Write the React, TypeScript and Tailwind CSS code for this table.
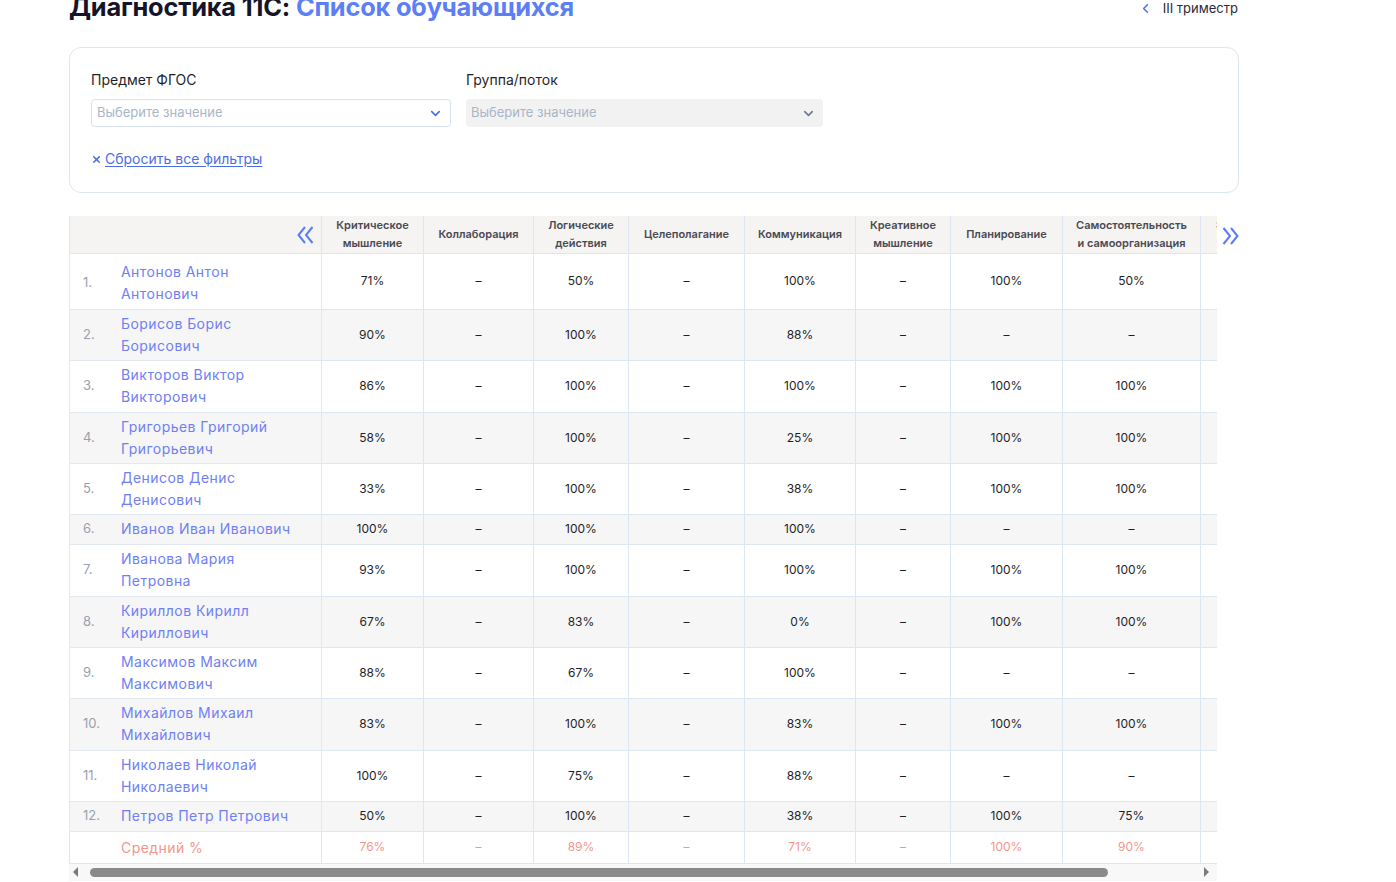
import { ChevronDown, ChevronLeft, X } from "lucide-react";

type Col = { title: string[]; width: string };

const COLUMNS: Col[] = [
  { title: ["Критическое", "мышление"], width: "w-[102px]" },
  { title: ["Коллаборация"], width: "w-[110px]" },
  { title: ["Логические", "действия"], width: "w-[95px]" },
  { title: ["Целеполагание"], width: "w-[116px]" },
  { title: ["Коммуникация"], width: "w-[111px]" },
  { title: ["Креативное", "мышление"], width: "w-[95px]" },
  { title: ["Планирование"], width: "w-[112px]" },
  { title: ["Самостоятельность", "и самоорганизация"], width: "w-[138px]" },
  { title: ["Эмоциональный", "интеллект"], width: "w-[123px]" },
];

// row heights follow the rendered table (two-line names vs one-line names)
const STUDENTS: { name: string; h: string; values: string[] }[] = [
  { name: "Антонов Антон Антонович", h: "h-[56px]", values: ["71%", "–", "50%", "–", "100%", "–", "100%", "50%", "–"] },
  { name: "Борисов Борис Борисович", h: "h-[51px]", values: ["90%", "–", "100%", "–", "88%", "–", "–", "–", "–"] },
  { name: "Викторов Виктор Викторович", h: "h-[52px]", values: ["86%", "–", "100%", "–", "100%", "–", "100%", "100%", "–"] },
  { name: "Григорьев Григорий Григорьевич", h: "h-[51px]", values: ["58%", "–", "100%", "–", "25%", "–", "100%", "100%", "–"] },
  { name: "Денисов Денис Денисович", h: "h-[51px]", values: ["33%", "–", "100%", "–", "38%", "–", "100%", "100%", "–"] },
  { name: "Иванов Иван Иванович", h: "h-[30px]", values: ["100%", "–", "100%", "–", "100%", "–", "–", "–", "–"] },
  { name: "Иванова Мария Петровна", h: "h-[52px]", values: ["93%", "–", "100%", "–", "100%", "–", "100%", "100%", "–"] },
  { name: "Кириллов Кирилл Кириллович", h: "h-[51px]", values: ["67%", "–", "83%", "–", "0%", "–", "100%", "100%", "–"] },
  { name: "Максимов Максим Максимович", h: "h-[51px]", values: ["88%", "–", "67%", "–", "100%", "–", "–", "–", "–"] },
  { name: "Михайлов Михаил Михайлович", h: "h-[52px]", values: ["83%", "–", "100%", "–", "83%", "–", "100%", "100%", "–"] },
  { name: "Николаев Николай Николаевич", h: "h-[51px]", values: ["100%", "–", "75%", "–", "88%", "–", "–", "–", "–"] },
  { name: "Петров Петр Петрович", h: "h-[30px]", values: ["50%", "–", "100%", "–", "38%", "–", "100%", "75%", "–"] },
];

const AVERAGE = ["76%", "–", "89%", "–", "71%", "–", "100%", "90%", "–"];

function DoubleChevron({ dir }: { dir: "left" | "right" }) {
  return (
    <svg width="17" height="18" viewBox="0 0 17 18" fill="none" stroke="#5a7cf4" strokeWidth="2" strokeLinejoin="miter">
      {dir === "left" ? (
        <>
          <polyline points="8,1 1.5,9 8,17" />
          <polyline points="15.5,1 9,9 15.5,17" />
        </>
      ) : (
        <>
          <polyline points="1.5,1 8,9 1.5,17" />
          <polyline points="9,1 15.5,9 9,17" />
        </>
      )}
    </svg>
  );
}

function FakeSelect({ disabled }: { disabled?: boolean }) {
  return (
    <div
      className={`flex h-[28px] items-center justify-between rounded-[4px] pl-[5px] pr-[7px] ${
        disabled ? "w-[357px] bg-[#f2f2f2]" : "w-[360px] border border-[#d5e1f3] bg-white"
      }`}
    >
      <span className="text-[13px] text-[#a9b5c8]">Выберите значение</span>
      <ChevronDown
        className={`h-[15px] w-[15px] ${disabled ? "text-[#6e7b8c]" : "text-[#4a6fe5]"}`}
        strokeWidth={2.6}
      />
    </div>
  );
}

export default function App() {
  return (
    <div className="min-h-[882px] w-[1396px] overflow-hidden bg-white pl-[69px] font-['Inter','Noto_Sans',sans-serif] text-[#1c1c28]">
      <div className="w-[1170px]">
        {/* header */}
        <div className="-mt-[9px] flex items-start justify-between">
          <h1 className="text-[25.4px] font-bold leading-[32px] tracking-[-0.2px] text-[#14142b]">
            Диагностика 11С: <span className="text-[#5c7ef6]">Список обучающихся</span>
          </h1>
          <div className="mt-[9px] flex items-center gap-[10px] pr-[1px] text-[13px] leading-[16px] text-[#2a2a3a]">
            <ChevronLeft className="h-[15px] w-[15px] text-[#4f74f0]" strokeWidth={2.6} />
            <span>III триместр</span>
          </div>
        </div>

        {/* filters */}
        <div className="mt-[24px] rounded-[12px] border border-[#dee6f0] px-[21px] pb-[24px] pt-[23px]">
          <div className="flex gap-[15px]">
            <div>
              <p className="text-[14px] leading-[18px] text-[#1f1f2b]">Предмет ФГОС</p>
              <div className="mt-[10px]">
                <FakeSelect />
              </div>
            </div>
            <div>
              <p className="text-[14px] leading-[18px] text-[#1f1f2b]">Группа/поток</p>
              <div className="mt-[10px]">
                <FakeSelect disabled />
              </div>
            </div>
          </div>
          <button className="mt-[23px] flex items-center gap-[3px] text-[14px] leading-[18px] text-[#4a6fe5]">
            <X className="h-[11px] w-[11px]" strokeWidth={3.5} />
            <span className="underline underline-offset-[2px]">Сбросить все фильтры</span>
          </button>
        </div>
      </div>

      {/* table */}
      <div className="mt-[23px] flex items-start">
        <div className="w-[1148px]">
          <div className="w-[1148px] overflow-hidden">
            <table className="w-[1255px] table-fixed border-collapse">
              <colgroup>
                <col className="w-[252px]" />
                {COLUMNS.map((c, i) => (
                  <col key={i} className={c.width} />
                ))}
              </colgroup>
              <thead>
                <tr className="h-[37px] bg-[#f5f4f2]">
                  <th className="border-b border-l border-r border-[#dde7f3] pr-[7px] pt-[2px]">
                    <div className="flex justify-end">
                      <DoubleChevron dir="left" />
                    </div>
                  </th>
                  {COLUMNS.map((c, i) => (
                    <th
                      key={i}
                      className="border-b border-r border-[#dde7f3] px-[4px] text-center text-[11px] font-semibold leading-[18px] text-[#4a4a52] whitespace-nowrap"
                    >
                      {c.title.map((t) => (
                        <div key={t}>{t}</div>
                      ))}
                    </th>
                  ))}
                </tr>
              </thead>
              <tbody>
                {STUDENTS.map((s, i) => {
                  const even = i % 2 === 1;
                  return (
                    <tr key={s.name} className={`${s.h} ${even ? "bg-[#f6f6f6]" : "bg-white"}`}>
                      <td
                        className={`border-b border-l border-r border-[#e2e8f0] pl-[13px] align-middle ${
                          i === 0 ? "pt-[3px]" : ""
                        }`}
                      >
                        <div className="flex items-center">
                          <span className="w-[38px] shrink-0 text-[13px] text-[#9aa1ad]">{i + 1}.</span>
                          <span className="max-w-[180px] text-[14px] leading-[22px] tracking-[0.45px] text-[#6e80f4]">
                            {s.name}
                          </span>
                        </div>
                      </td>
                      {s.values.map((v, j) => (
                        <td
                          key={j}
                          className="border-b border-r border-[#dde7f3] text-center text-[12px] text-[#1e1e28]"
                        >
                          {v}
                        </td>
                      ))}
                    </tr>
                  );
                })}
                <tr className="h-[32px] bg-white">
                  <td className="border-b border-l border-r border-[#dde7f3] pl-[51px] text-[14px] tracking-[0.45px] text-[#f5968a]">
                    Средний %
                  </td>
                  {AVERAGE.map((v, j) => (
                    <td
                      key={j}
                      className="border-b border-r border-[#dde7f3] text-center text-[12px] text-[#f5968a]"
                    >
                      {v}
                    </td>
                  ))}
                </tr>
              </tbody>
            </table>
          </div>

          {/* scrollbar */}
          <div className="flex h-[17px] items-center bg-[#f8f8f8] px-[3px]">
            <svg width="8" height="10" viewBox="0 0 8 10" className="shrink-0">
              <path d="M6 0 L1 5 L6 10 Z" fill="#7a7a7a" />
            </svg>
            <div className="ml-[10px] h-[9px] w-[1018px] rounded-full bg-[#8a8a8a]" />
            <div className="flex-1" />
            <svg width="8" height="10" viewBox="0 0 8 10" className="mr-[4px] shrink-0">
              <path d="M2 0 L7 5 L2 10 Z" fill="#7a7a7a" />
            </svg>
          </div>
        </div>
        <div className="pl-[5px] pt-[11px]">
          <DoubleChevron dir="right" />
        </div>
      </div>
    </div>
  );
}
